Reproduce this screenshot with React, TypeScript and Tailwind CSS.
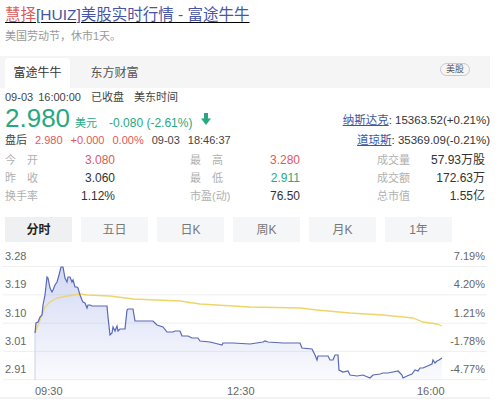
const BLUE =
  "35,333 36,323 38,322 40,317 42,315 43,305 45,295 47,277 48,278 50,288 52,292 53,290 55,285 57,282 59,275 61,267 63,267 65,278 67,282 68,277 70,277 72,282 73,280 75,287 77,287 78,288 80,295 82,300 83,302 85,303 87,308 88,305 90,305 92,306 107,306 108,317 110,335 112,333 113,327 115,331 117,326 118,331 120,329 125,329 127,310 128,309 133,309 135,321 153,321 157,325 163,327 167,332 173,332 175,331 180,331 182,336 188,336 192,338 198,338 200,341 210,342 218,344 222,345 223,343 233,343 250,344 263,342 265,341 268,342 283,343 300,343 302,348 312,349 315,355 317,360 318,356 328,356 330,360 333,360 335,355 338,355 339,370 343,372 348,371 350,375 357,376 363,375 370,378 373,375 380,374 383,373 388,373 393,372 398,371 402,375 403,378 407,376 412,374 415,370 418,371 420,368 423,368 432,364 433,360 435,363 437,361 439,360 442,358";

const AVG =
  "35,333 40,320 45,307 50,302 57,298 67,296 80,294 87,295 110,296 133,299 180,301 200,304 250,307 300,308 317,310 350,313 383,315 413,318 423,322 437,324 442,326";

const LEFT_AXIS = ["3.28", "3.19", "3.10", "3.01", "2.91"];
const RIGHT_AXIS = ["7.19%", "4.20%", "1.21%", "-1.78%", "-4.77%"];
const RANGES = ["分时", "五日", "日K", "周K", "月K", "1年"];

type Cell = { label: string; spread?: boolean; value: string; color: string };

const STATS: Cell[][] = [
  [
    { label: "今开", spread: true, value: "3.080", color: "text-[#e0585a]" },
    { label: "最高", spread: true, value: "3.280", color: "text-[#e0585a]" },
    { label: "成交量", value: "57.93万股", color: "text-[#333]" },
  ],
  [
    { label: "昨收", spread: true, value: "3.060", color: "text-[#333]" },
    { label: "最低", spread: true, value: "2.911", color: "text-[#2ba784]" },
    { label: "成交额", value: "172.63万", color: "text-[#333]" },
  ],
  [
    { label: "换手率", value: "1.12%", color: "text-[#333]" },
    { label: "市盈(动)", value: "76.50", color: "text-[#333]" },
    { label: "总市值", value: "1.55亿", color: "text-[#333]" },
  ],
];

function Label({ cell }: { cell: Cell }) {
  if (cell.spread) {
    return (
      <span className="flex w-[33px] justify-between">
        {cell.label.split("").map((c) => (
          <span key={c}>{c}</span>
        ))}
      </span>
    );
  }
  return <span>{cell.label}</span>;
}

export default function App() {
  return (
    <div className="w-[500px] h-[411px] overflow-hidden bg-white pl-[5px] font-['Liberation_Sans','Noto_Sans_CJK_SC',sans-serif]">
      <h1 className="mt-[4px] text-[15.5px] leading-[22px] underline decoration-1 underline-offset-2">
        <span className="text-[#e05a5a]">慧择</span>
        <span className="text-[#4656a4]">[HUIZ]美股实时行情 - 富途牛牛</span>
      </h1>
      <p className="mt-[2px] text-[11px] leading-[16px] text-[#999]">美国劳动节，休市1天。</p>

      {/* source tabs */}
      <div className="-ml-[5px] mt-[12px] flex h-[32px] w-[490px] items-start bg-[#f5f5f5] pl-[5px] pt-[2px]">
        <div className="flex h-[30px] w-[65px] items-center justify-center rounded-t-[4px] bg-white text-[12px] text-[#333]">
          富途牛牛
        </div>
        <div className="ml-[12px] flex h-[30px] w-[65px] items-center justify-center text-[12px] text-[#555]">
          东方财富
        </div>
        <span className="ml-auto mr-[20px] mt-[5px] flex h-[13px] items-center rounded-full border border-[#c8c8c8] px-[5px] text-[9px] leading-[11px] text-[#555]">
          美股
        </span>
      </div>

      <div className="mt-[2px] flex gap-[5px] text-[11px] leading-[14px] text-[#444]">
        <span>09-03</span>
        <span>16:00:00</span>
        <span className="ml-[5px]">已收盘</span>
        <span className="ml-[5px]">美东时间</span>
      </div>

      <div className="flex items-start justify-between pr-[10px]">
        <div className="flex items-baseline text-[#27a882]">
          <span className="text-[26px] leading-[28px]">2.980</span>
          <span className="ml-[5px] text-[11px]">美元</span>
          <span className="ml-[12px] text-[12px]">-0.080 (-2.61%)</span>
          <svg width="10" height="12" viewBox="0 0 10 12" className="ml-[9px] self-center translate-y-[1px]">
            <rect x="3" y="0" width="4" height="6" fill="#27a882" />
            <polygon points="0,5.5 10,5.5 5,12" fill="#27a882" />
          </svg>
        </div>
        <div className="pt-[8px] text-[11.5px] leading-[16px] text-[#333]">
          <span className="text-[#3d57a6] underline">纳斯达克</span>: 15363.52(+0.21%)
        </div>
      </div>

      <div className="flex items-center justify-between pr-[10px] text-[11px] leading-[16px]">
        <div className="flex gap-[8px]">
          <span className="text-[#444]">盘后</span>
          <span className="text-[#e0585a]">2.980</span>
          <span className="text-[#e0585a]">+0.000</span>
          <span className="text-[#e0585a]">0.00%</span>
          <span className="text-[#444]">09-03</span>
          <span className="text-[#444]">18:46:37</span>
        </div>
        <div className="text-[11.5px] text-[#333]">
          <span className="text-[#3d57a6] underline">道琼斯</span>: 35369.09(-0.21%)
        </div>
      </div>

      <div className="mt-[3px] pr-[15px]">
        {STATS.map((row, i) => (
          <div
            key={i}
            className="grid grid-cols-[50px_60px_135px_50px_110px_1fr] items-center text-[11px] leading-[18px]"
          >
            <span className="text-[#b0b0b0]">
              <Label cell={row[0]} />
            </span>
            <span className={`text-right text-[12px] ${row[0].color}`}>{row[0].value}</span>
            <span className="pl-[75px] text-[#b0b0b0]">
              <Label cell={row[1]} />
            </span>
            <span className={`text-right text-[12px] ${row[1].color}`}>{row[1].value}</span>
            <span className="pl-[77px] text-[#b0b0b0]">
              <Label cell={row[2]} />
            </span>
            <span className={`text-right text-[12px] ${row[2].color}`}>{row[2].value}</span>
          </div>
        ))}
      </div>

      {/* range tabs */}
      <div className="mt-[12px] flex gap-[9px]">
        {RANGES.map((r, i) => (
          <button
            key={r}
            className={`flex h-[25px] w-[67px] items-center justify-center text-[12px] ${
              i === 0 ? "bg-[#eff0f2] font-bold text-[#222]" : "bg-[#f5f6f8] text-[#777]"
            }`}
          >
            {r}
          </button>
        ))}
      </div>

      {/* intraday chart */}
      <svg
        width="500"
        height="169"
        viewBox="0 242 500 169"
        className="-ml-[5px] block"
        fontSize="11"
      >
        <defs>
          <linearGradient id="area" x1="0" y1="0" x2="0" y2="1">
            <stop offset="0%" stopColor="#8c9be0" stopOpacity="0.38" />
            <stop offset="100%" stopColor="#8c9be0" stopOpacity="0.04" />
          </linearGradient>
        </defs>
        {LEFT_AXIS.map((v, i) => {
          const y = 266.5 + i * 28.3;
          return (
            <g key={v}>
              <line x1="3" x2="487" y1={y} y2={y} stroke="#efefef" strokeWidth="1" />
              <text x="5" y={y - 6.5} fill="#666">
                {v}
              </text>
              <text x="485" y={y - 6.5} fill="#666" textAnchor="end">
                {RIGHT_AXIS[i]}
              </text>
            </g>
          );
        })}
        <line x1="0" x2="490" y1="398" y2="398" stroke="#e6e6e6" strokeWidth="1" />
        <polygon points={`${BLUE} 442,380 35,380`} fill="url(#area)" />
        <line x1="35" x2="35" y1="333" y2="380" stroke="#c9d0f0" strokeWidth="1" />
        <polyline points={AVG} fill="none" stroke="#efd46a" strokeWidth="1.3" />
        <polyline points={BLUE} fill="none" stroke="#5868bb" strokeWidth="1.2" />
        <text x="35" y="395" fill="#666">
          09:30
        </text>
        <text x="227" y="395" fill="#666">
          12:30
        </text>
        <text x="417" y="395" fill="#666">
          16:00
        </text>
      </svg>
    </div>
  );
}
